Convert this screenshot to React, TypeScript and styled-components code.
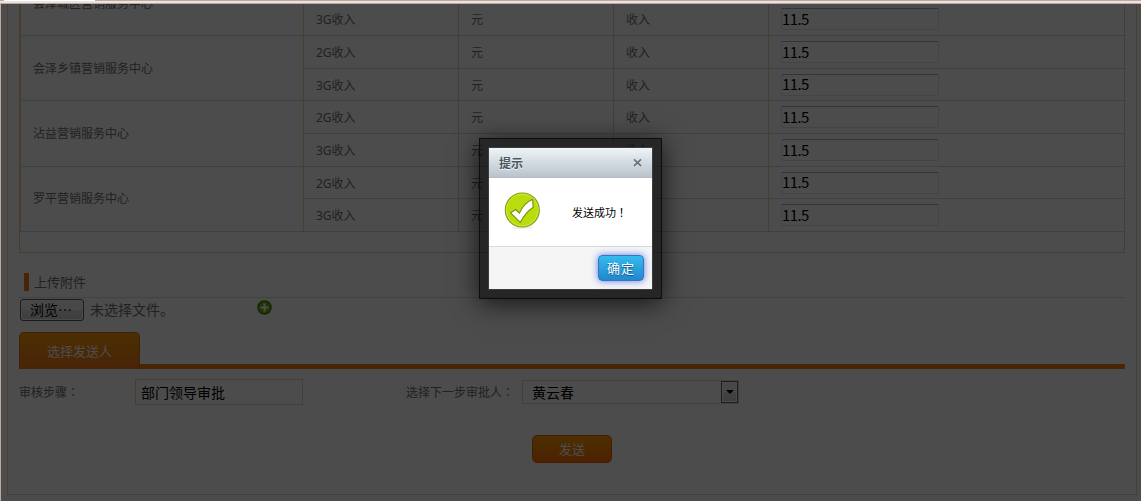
import React from 'react';
import styled, { createGlobalStyle } from 'styled-components';

const GlobalStyle = createGlobalStyle`
  * { box-sizing: border-box; }
  html, body { margin: 0; overflow: hidden; }
  body { font-family: "Noto Sans", "Noto Sans CJK SC", sans-serif; font-size: 12px; color: #707070; }
  input, button { font-family: inherit; margin: 0; }
`;

const Frame = styled.div`
  display: flex;
  flex-direction: column;
  width: 1141px;
  height: 501px;
  overflow: hidden;
  background: #fff;
`;

const TabStrip = styled.div`
  flex: none;
  height: 4px;
  padding-left: 4px;
  background: #e8e4e3;
  border-top: 1px solid #c3a999;
  border-bottom: 1px solid #bba79c;
`;

const ActiveTab = styled.div`
  width: 91px;
  height: 1px;
  margin-top: -1px;
  background: #fff;
`;

const Viewport = styled.div`
  position: relative;
  flex: 1;
  min-height: 0;
  overflow: hidden;
  border-left: 1px solid #c3a999;
`;

const Panel = styled.div`
  display: flex;
  flex-direction: column;
  width: 1130px;
  height: 491px;
  margin-left: 6px;
  padding: 0 11px;
  overflow: hidden;
  border: 1px solid #edd5b0;
  border-top: 0;
`;

const TableBox = styled.div`
  flex: none;
  height: 249px;
  overflow: hidden;
  border: 1px solid #edd0a5;
  border-top: 0;
`;

const Groups = styled.div`
  margin-top: -34px;
  border-left: 1px solid #edd0a5;
`;

const Group = styled.div`
  display: flex;
`;

const NameCell = styled.div<{ $lift: number }>`
  display: flex;
  align-items: center;
  width: 283px;
  padding: 0 0 ${p => p.$lift}px 12px;
  border-right: 1px solid #edd0a5;
  border-bottom: 1px solid #bedcee;
`;

const Rows = styled.div`
  flex: 1;
`;

const Row = styled.div<{ $h: number }>`
  display: grid;
  grid-template-columns: 155px 155px 155px 1fr;
  height: ${p => p.$h}px;
`;

const Cell = styled.div<{ $last?: boolean }>`
  display: flex;
  align-items: center;
  padding-left: 12px;
  border-right: ${p => (p.$last ? '0' : '1px solid #edd0a5')};
  border-bottom: 1px solid #bedcee;
`;

const ValueInput = styled.input`
  width: 158px;
  height: 22px;
  padding: 0 0 2px;
  font-family: "Noto Sans CJK SC", sans-serif;
  font-size: 15px;
  line-height: 18px;
  letter-spacing: -0.6px;
  color: #000;
  background: #fff;
  border: 1px solid #e3e3e3;
  border-top-color: #abadb3;
  border-radius: 2px;
`;

const SectionTitle = styled.div`
  display: flex;
  flex: none;
  align-items: center;
  gap: 5px;
  height: 31px;
  margin-top: 14px;
  padding: 0 0 1px 5px;
  font-size: 13px;
  line-height: 20px;
  border-bottom: 1px solid #e2dcc8;

  &::before {
    content: "";
    width: 5px;
    height: 18px;
    background: #f57c12;
  }
`;

const FileRow = styled.div`
  display: flex;
  flex: none;
  align-items: center;
  height: 24px;
  padding-left: 1px;
  font-size: 14px;
`;

const BrowseButton = styled.button`
  width: 64px;
  height: 22px;
  padding: 0 2px 0 0;
  font-size: 14px;
  line-height: 18px;
  color: #000;
  background: linear-gradient(#f2f2f2 0 48%, #ddd 52%, #cfcfcf);
  border: 1px solid #606060;
  border-radius: 3px;
  box-shadow: inset 0 0 0 1px #fafafa;
`;

const FileText = styled.span`
  width: 167px;
  margin-left: 6px;
  padding-bottom: 2px;
`;

const TabBar = styled.div`
  flex: none;
  height: 37px;
  margin-top: 10px;
  background: linear-gradient(#f57c12, #f57c12) bottom / 100% 5px no-repeat;
`;

const SenderTab = styled.div`
  width: 121px;
  height: 37px;
  font-size: 13px;
  line-height: 36px;
  text-align: center;
  color: #fff;
  background: linear-gradient(#fd9c0a, #f27918);
  border: 1px solid #dc6b12;
  border-bottom: 0;
  border-radius: 5px 5px 0 0;
`;

const FormRow = styled.div`
  display: flex;
  flex: none;
  align-items: center;
  height: 26px;
  margin-top: 10px;
`;

const Label = styled.span`
  width: 116px;
  white-space: nowrap;
`;

/* Full-width punctuation centred in its em box */
const Mark = styled.span`
  font-family: "Noto Sans CJK TC", sans-serif;
`;

const StepInput = styled.input`
  width: 168px;
  height: 26px;
  margin-right: 103px;
  padding: 0 5px;
  font-size: 14px;
  color: #000;
  background: #fff;
  border: 1px solid #e8d6b5;
`;

const Select = styled.div`
  display: flex;
  align-items: center;
  justify-content: space-between;
  width: 217px;
  height: 24px;
  padding-left: 9px;
  font-size: 14px;
  color: #000;
  border: 1px solid #e8d6b5;
`;

const SelectArrow = styled.span`
  display: flex;
  align-items: center;
  justify-content: center;
  width: 17px;
  height: 22px;
  background: linear-gradient(#f2f2f2 0 48%, #ddd 52%, #cfcfcf);
  border: 1px solid #666;
  box-shadow: inset 0 0 0 1px #fafafa;

  &::before {
    content: "";
    border: 4px solid transparent;
    border-top-color: #000;
    border-bottom: 0;
  }
`;

const SendButton = styled.button`
  flex: none;
  align-self: center;
  width: 80px;
  height: 28px;
  margin: 30px 0 0 0;
  padding: 0 0 2px;
  font-size: 13px;
  color: #fff;
  background: linear-gradient(#ff9c00, #ff7200);
  border: 1px solid #e06410;
  border-radius: 5px;
`;

const Mask = styled.div`
  position: absolute;
  inset: 0;
  background: rgba(0, 0, 0, 0.7);
`;

const DialogFrame = styled.div`
  position: absolute;
  left: 478px;
  top: 134px;
  width: 183px;
  height: 161px;
  padding: 8px;
  background: rgba(0, 0, 0, 0.5);
  border: 1px solid #0e0e0e;
  box-shadow: 0 4px 24px rgba(0, 0, 0, 0.72);
`;

const Dialog = styled.div`
  display: flex;
  flex-direction: column;
  width: 165px;
  height: 143px;
  border: 1px solid #3a3c3e;
  background: #fff;
`;

const DialogHeader = styled.div`
  display: flex;
  flex: none;
  align-items: center;
  justify-content: space-between;
  height: 30px;
  padding: 0 9px 0 10px;
  font-weight: 700;
  color: #4a5862;
  text-shadow: 0 1px 0 rgba(255, 255, 255, 0.8);
  background: linear-gradient(#edf5f8, #bac2cc);
  border-bottom: 1px solid #b5bcc4;
`;

const DialogBody = styled.div`
  display: flex;
  flex: 1;
  align-items: center;
  gap: 30px;
  padding-left: 15px;
  font-size: 11px;
  color: #000;
`;

const DialogFooter = styled.div`
  display: flex;
  flex: none;
  align-items: center;
  justify-content: flex-end;
  height: 43px;
  padding-right: 8px;
  background: #f5f5f6;
  border-top: 1px solid #d5d9e2;
`;

const OkButton = styled.button`
  width: 46px;
  height: 26px;
  padding: 0;
  font-size: 13px;
  line-height: 22px;
  letter-spacing: 1px;
  color: #fff;
  text-shadow: 0 1px 1px rgba(0, 50, 100, 0.7);
  background: linear-gradient(#33bbee, #2288cc);
  border: 1px solid #3b6fce;
  border-radius: 4px;
  box-shadow: 0 0 7px #5b7fdc;
`;

const CloseIcon = () => (
  <svg width="11" height="11" viewBox="0 0 11 11" stroke="#66737d" strokeWidth="1.7">
    <path d="M2 2.3 9 8.8M9 2.3 2 8.8" />
  </svg>
);

const SuccessIcon = () => (
  <svg width="38" height="40" viewBox="0 0 38 40">
    <ellipse cx="18.3" cy="35.6" rx="11" ry="1.6" fill="#f0f1ee" />
    <circle cx="18.3" cy="18" r="17" fill="#b9dd0c" stroke="#829c17" strokeWidth="1.1" />
    <circle cx="18.3" cy="18" r="15.9" fill="none" stroke="#d1eb4c" strokeWidth="0.8" />
    <path
      d="M6.6 20.8 11.8 17.5 15.4 21.2C18 15 22.5 10 28.6 7.3L29.2 15.2C23.6 19 19.6 24 16.2 30.4Z"
      fill="#fff"
      stroke="#779108"
      strokeWidth="1.1"
      strokeLinejoin="round"
    />
  </svg>
);

const AddIcon = () => (
  <svg width="15" height="15" viewBox="0 0 15 15">
    <circle cx="7.5" cy="7.5" r="6.6" fill="#6fae08" stroke="#417b00" strokeWidth="1.3" />
    <path d="M7.5 3.5v8M3.5 7.5h8" stroke="#fff" strokeWidth="2" />
  </svg>
);

const AddButton = styled.span`
  display: flex;
  margin-top: -6px;
`;

const groups = [
  { name: '会泽城区营销服务中心', lift: 0, rows: [{ title: '', height: 33 }, { title: '3G收入', height: 33 }] },
  { name: '会泽乡镇营销服务中心', lift: 1, rows: [{ title: '2G收入', height: 33 }, { title: '3G收入', height: 32 }] },
  { name: '沾益营销服务中心', lift: 1, rows: [{ title: '2G收入', height: 33 }, { title: '3G收入', height: 33 }] },
  { name: '罗平营销服务中心', lift: 2, rows: [{ title: '2G收入', height: 32 }, { title: '3G收入', height: 33 }] },
];

export default function App() {
  return (
    <Frame>
      <GlobalStyle />
      <TabStrip>
        <ActiveTab />
      </TabStrip>
      <Viewport>
        <Panel>
          <TableBox>
            <Groups>
              {groups.map(group => (
                <Group key={group.name}>
                  <NameCell $lift={group.lift}>{group.name}</NameCell>
                  <Rows>
                    {group.rows.map((row, i) => (
                      <Row key={i} $h={row.height}>
                        <Cell>{row.title}</Cell>
                        <Cell>{row.title && '元'}</Cell>
                        <Cell>{row.title && '收入'}</Cell>
                        <Cell $last>{row.title && <ValueInput defaultValue="11.5" />}</Cell>
                      </Row>
                    ))}
                  </Rows>
                </Group>
              ))}
            </Groups>
          </TableBox>
          <SectionTitle>上传附件</SectionTitle>
          <FileRow>
            <BrowseButton>浏览⋯</BrowseButton>
            <FileText>未选择文件。</FileText>
            <AddButton>
              <AddIcon />
            </AddButton>
          </FileRow>
          <TabBar>
            <SenderTab>选择发送人</SenderTab>
          </TabBar>
          <FormRow>
            <Label>
              审核步骤<Mark>：</Mark>
            </Label>
            <StepInput defaultValue="部门领导审批" />
            <Label>
              选择下一步审批人<Mark>：</Mark>
            </Label>
            <Select>
              黄云春
              <SelectArrow />
            </Select>
          </FormRow>
          <SendButton>发送</SendButton>
        </Panel>
        <Mask />
        <DialogFrame>
          <Dialog>
            <DialogHeader>
              提示
              <CloseIcon />
            </DialogHeader>
            <DialogBody>
              <SuccessIcon />
              <span>
                发送成功<Mark>！</Mark>
              </span>
            </DialogBody>
            <DialogFooter>
              <OkButton>确定</OkButton>
            </DialogFooter>
          </Dialog>
        </DialogFrame>
      </Viewport>
    </Frame>
  );
}
